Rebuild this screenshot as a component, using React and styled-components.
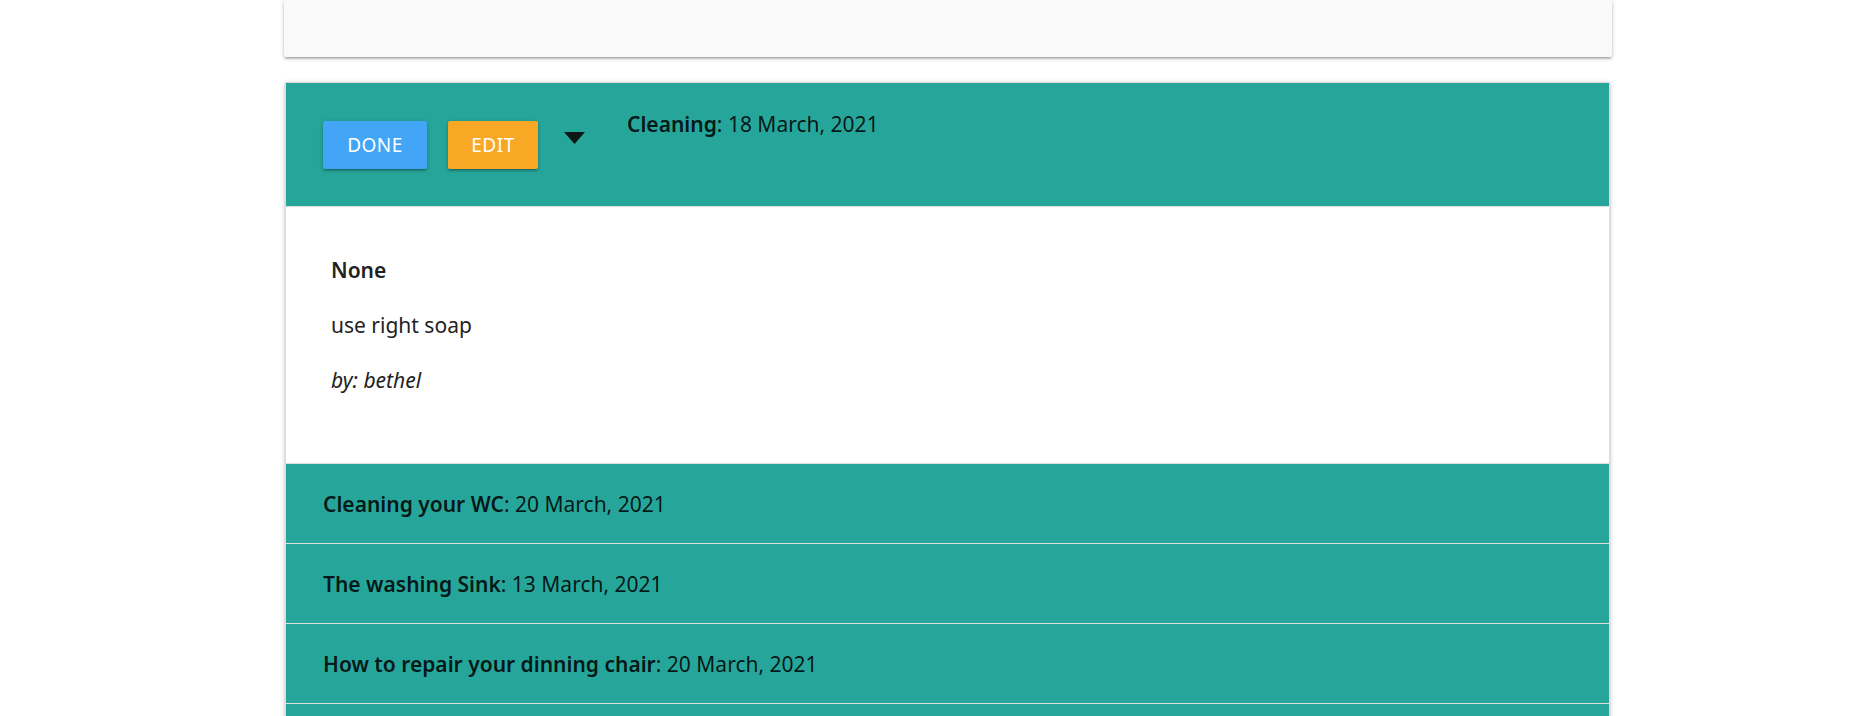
import React from 'react'
import styled, { createGlobalStyle } from 'styled-components'

const GlobalStyle = createGlobalStyle`
    body {
        margin: 0;
        background: #fff;
        font-family: "Noto Sans", "Open Sans", sans-serif;
        color: rgba(0, 0, 0, 0.87);
    }
`
const Page = styled.div`
    width: 1328px;
    margin: 0 0 0 284px;
`
const FormCard = styled.div`
    height: 57px;
    background-color: #f9f9f9;
    border-radius: 0 0 2px 2px;
    box-shadow: 0 2px 2px 0 rgba(0,0,0,.14), 0 3px 1px -2px rgba(0,0,0,.12), 0 1px 5px 0 rgba(0,0,0,.2);
`
const Collapsible = styled.ul`
    list-style: none;
    margin: 25px 2px 0 1px;
    padding: 0;
    border: 1px solid #ddd;
    border-bottom: none;
    box-shadow: 0 2px 2px 0 rgba(0,0,0,.14), 0 3px 1px -2px rgba(0,0,0,.12), 0 1px 5px 0 rgba(0,0,0,.2);
`
const Item = styled.li`
    border-bottom: 1px solid #ddd;
`
const Header = styled.div`
    display: flex;
    background-color: #26a69a;
    padding: ${p => p.open ? '26px 37px 37px' : '0 37px'};
    height: ${p => p.open ? 'auto' : '79px'};
    align-items: ${p => p.open ? 'flex-start' : 'center'};
    box-sizing: border-box;
    font-size: 21px;
    line-height: 30px;
`
const Actions = styled.div`
    display: flex;
    align-items: center;
    margin-top: 12px;
`
const Button = styled.button`
    height: 48px;
    width: ${p => p.w}px;
    margin-right: ${p => p.gap}px;
    padding: 0;
    border: none;
    border-radius: 2px;
    background-color: ${p => p.color};
    color: #fff;
    font-family: inherit;
    font-size: 19px;
    letter-spacing: .5px;
    text-transform: uppercase;
    cursor: pointer;
    box-shadow: 0 2px 2px 0 rgba(0,0,0,.14), 0 3px 1px -2px rgba(0,0,0,.12), 0 1px 5px 0 rgba(0,0,0,.2);
`
const Caret = styled.svg`
    display: block;
    margin: -14px 42px 0 0;
`
const Title = styled.b`
    font-weight: 600;
`
const Body = styled.div`
    padding: 48px 45px 43px;
    background: #fff;
    border-top: 1px solid #ddd;
    font-size: 21px;
    line-height: 30px;
    color: #222;
`
const Para = styled.p`
    margin: 0 0 25px;
    font-weight: ${p => p.bold ? 600 : 400};
    font-style: ${p => p.italic ? 'italic' : 'normal'};
`

const tasks = [
    { title: 'Cleaning your WC', date: '20 March, 2021' },
    { title: 'The washing Sink', date: '13 March, 2021' },
    { title: 'How to repair your dinning chair', date: '20 March, 2021' },
]

function App() {
  return (
    <>
        <GlobalStyle/>
        <Page>
            <FormCard/>
            <Collapsible>
                <Item>
                    <Header open>
                        <Actions>
                            <Button color="#42a5f5" w={104} gap={21}>Done</Button>
                            <Button color="#f9a825" w={90} gap={26}>Edit</Button>
                            <Caret width="21" height="12" viewBox="0 0 21 12">
                                <polygon points="0,0 21,0 10.5,12" fill="#0b1816"/>
                            </Caret>
                        </Actions>
                        <span><Title>Cleaning</Title>: 18 March, 2021</span>
                    </Header>
                    <Body>
                        <Para bold>None</Para>
                        <Para>use right soap</Para>
                        <Para italic>by: bethel</Para>
                    </Body>
                </Item>
                {tasks.map(t => (
                    <Item key={t.title}>
                        <Header>
                            <span><Title>{t.title}</Title>: {t.date}</span>
                        </Header>
                    </Item>
                ))}
                <Item>
                    <Header/>
                </Item>
            </Collapsible>
        </Page>
    </>
  )
}

export default App
